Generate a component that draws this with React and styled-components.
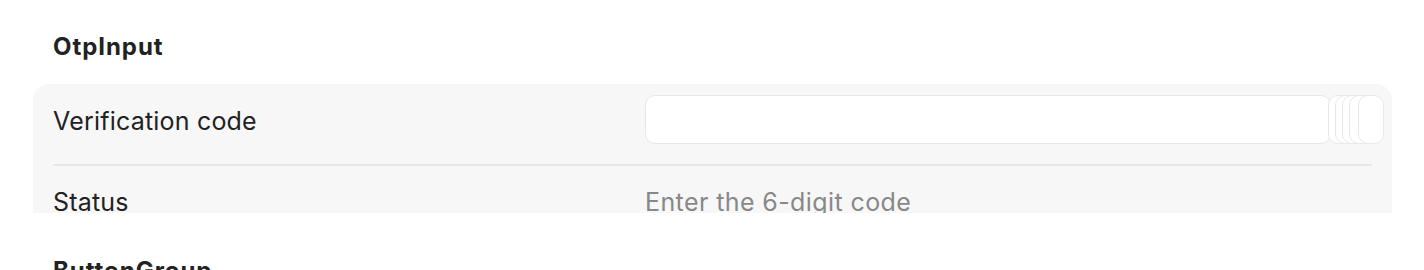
import React from "react";
import styled, { createGlobalStyle } from "styled-components";

const Global = createGlobalStyle`
  html, body { margin: 0; padding: 0; background: #ffffff; }
  body { font-family: Inter, "Noto Sans", "Liberation Sans", sans-serif; color: #1f1f1f; -webkit-font-smoothing: antialiased; }
`;

const Page = styled.div`
  padding: 33px 32px 0 33px;
  display: flex;
  flex-direction: column;
`;

const Section = styled.section`
  display: flex;
  flex-direction: column;
  margin-bottom: 44px;
`;

const SectionTitle = styled.h2`
  margin: 0 0 24px 20px;
  font-size: 24px;
  line-height: 27px;
  font-weight: 700;
  color: #222222;
  letter-spacing: 0.95px;
`;

const Panel = styled.div`
  background: #f7f7f7;
  border-radius: 16px 16px 0 0;
  height: 129px;
  overflow: hidden;
  display: flex;
  flex-direction: column;
`;

const Row = styled.div`
  display: grid;
  grid-template-columns: 592px 1fr;
  align-items: center;
  padding: ${(p) => p.$pad};
  margin: 0 20px;
`;

const Divider = styled.hr`
  border: 0;
  height: 2px;
  background: #e8e8e8;
  margin: 0 20px;
  flex: 0 0 2px;
`;

const Label = styled.div`
  font-size: 25px;
  line-height: 30px;
  letter-spacing: 0.2px;
  color: #222222;
  padding-top: ${(p) => p.$shift || 0}px;
`;

const Value = styled.div`
  font-size: 25px;
  line-height: 30px;
  letter-spacing: 0.4px;
  color: #888888;
`;

const OtpRow = styled.div`
  display: flex;
  margin-right: -12px;
`;

const OtpBox = styled.div`
  flex: ${(p) => (p.$wide ? "1" : "0 0 26px")};
  height: 49px;
  box-sizing: border-box;
  background: #ffffff;
  border: 1px solid #e8e8e8;
  border-radius: 10px;
  margin-left: ${(p) => p.$overlap || 0}px;
`;

const overlaps = [0, -3, -19, -19, -19, -17];

export default function App() {
  return (
    <>
      <Global />
      <Page>
        <Section>
          <SectionTitle>OtpInput</SectionTitle>
          <Panel>
            <Row $pad="11px 0 20px">
              <Label $shift={3}>Verification code</Label>
              <OtpRow>
                {overlaps.map((o, i) => (
                  <OtpBox key={i} $wide={i === 0} $overlap={o} />
                ))}
              </OtpRow>
            </Row>
            <Divider />
            <Row $pad="21px 0 0">
              <Label>Status</Label>
              <Value>Enter the 6-digit code</Value>
            </Row>
          </Panel>
        </Section>
        <Section>
          <SectionTitle>ButtonGroup</SectionTitle>
        </Section>
      </Page>
    </>
  );
}
